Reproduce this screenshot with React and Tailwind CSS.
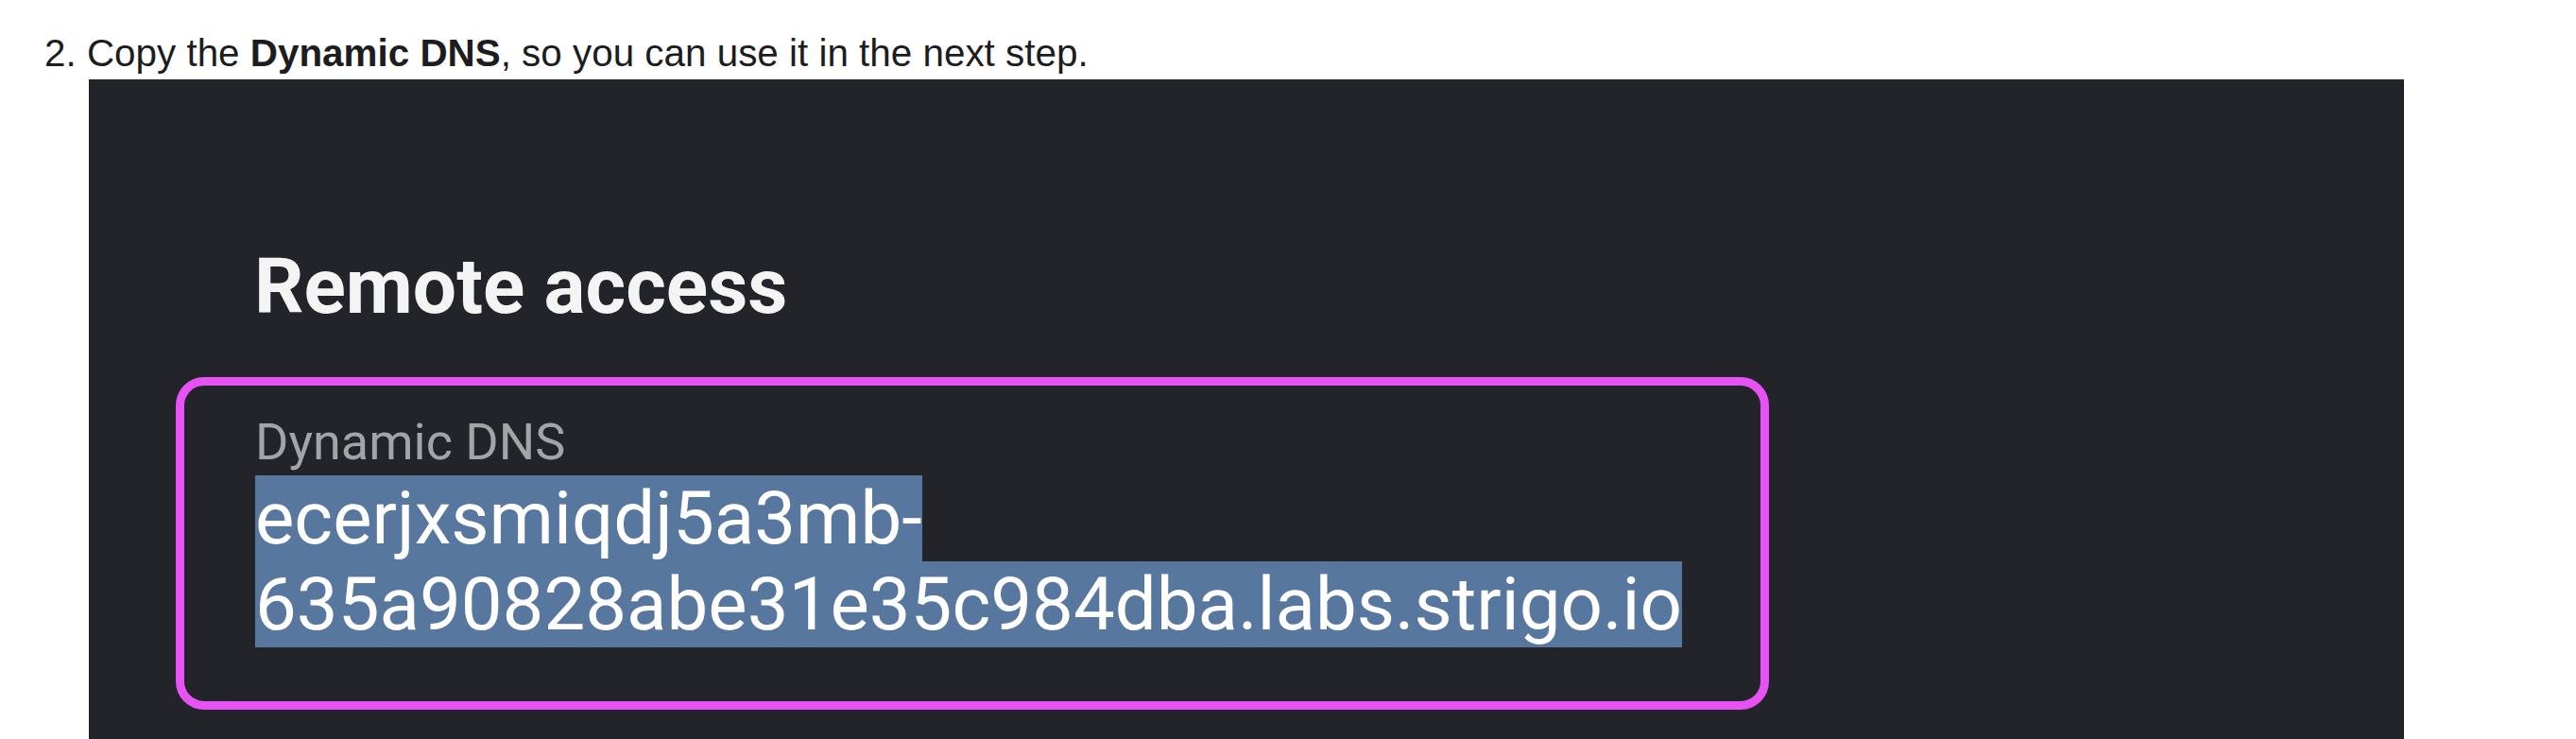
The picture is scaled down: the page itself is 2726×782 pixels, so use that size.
export default function App() {
  return (
    <div className="w-full h-[782px] overflow-hidden bg-white">
      {/* step text */}
      <p className="pt-[32px] pl-[47px] text-[40.4px] leading-[48px] text-[#1d1d1f] font-['Liberation_Sans',Arial,sans-serif]">
        2. Copy the <b className="font-bold">Dynamic DNS</b>, so you can use it in the next step.
      </p>

      {/* screenshot panel */}
      <div className="mt-[4px] ml-[94px] w-[2450px] h-[900px] bg-[#232429] pt-[171px] font-['Roboto',sans-serif]">
        <h1 className="pl-[175px] text-[82px] leading-[96px] font-bold text-[#f4f4f5]">Remote access</h1>

        <div className="mt-[48px] ml-[92px] w-[1686px] rounded-[30px] border-[9px] border-[#e652f3] pt-[28px] pb-[57px] pl-[75px]">
          <div className="text-[54px] leading-[64px] text-[#a3a4a8]">Dynamic DNS</div>
          <div className="mt-[3px] flex flex-col items-start text-[78px] leading-[91px] text-white">
            <span className="bg-[#58779e]">ecerjxsmiqdj5a3mb-</span>
            <span className="bg-[#58779e]">635a90828abe31e35c984dba.labs.strigo.io</span>
          </div>
        </div>

        <div className="mt-[28px] pl-[176px] text-[54px] leading-[64px] text-[#a3a4a8]">Public IP</div>
      </div>
    </div>
  );
}
